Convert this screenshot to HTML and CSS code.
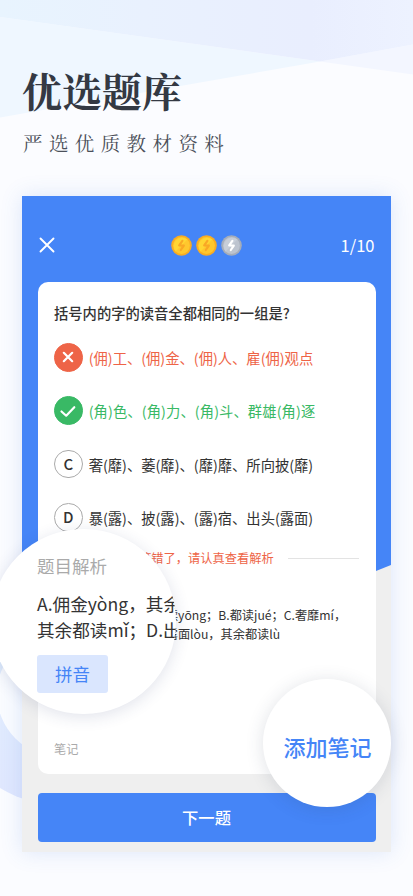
FILE: index.html
```html
<!DOCTYPE html>
<html lang="zh-CN">
<head>
<meta charset="utf-8">
<meta name="viewport" content="width=device-width, initial-scale=1">
<title>优选题库</title>
<link rel="stylesheet" href="styles.css">
</head>
<body>
<div class="page">
  <svg class="backdrop" viewBox="0 0 413 896" aria-hidden="true">
    <defs>
      <linearGradient id="sky" x1="0" x2="1"><stop offset="0" stop-color="#e8f4fe"/><stop offset=".35" stop-color="#e9f1fe"/><stop offset=".75" stop-color="#e9eefe"/><stop offset="1" stop-color="#edf2ff"/></linearGradient>
      <linearGradient id="ring" x1="0" y1="0" x2="0" y2="1"><stop offset=".4" stop-color="#e0edfe"/><stop offset="1" stop-color="#e0e7fe"/></linearGradient>
    </defs>
    <path d="M0 17 320 61.500 0 117.500Z" fill="#eff7ff"/>
    <path d="M320 61.500 413 44.500V74.500Z" fill="#f3f6ff"/>
    <path d="M0 0H413V44.500L320 61.500 0 17Z" fill="url(#sky)"/>
    <circle cx="60" cy="690" r="115" fill="url(#ring)"/>
    <circle cx="60" cy="694" r="63" fill="#fafcff"/>
  </svg>

  <header class="intro">
    <h1>优选题库</h1>
    <p>严选优质教材资料</p>
  </header>

  <main class="phone">
    <div class="topbar">
      <svg class="close" viewBox="0 0 16 16"><path d="M1.500 1.500 14.500 14.500M14.500 1.500 1.500 14.500"/></svg>
      <div class="coins">
        <svg class="coin" viewBox="0 0 21 21"><circle class="rim" cx="10.500" cy="10.500" r="10.300"/><circle class="face" cx="10.500" cy="10.500" r="8.400"/><path class="shine" d="M4.600 16.400A8.400 8.400 0 0 1 16.400 4.600Z"/><path class="bolt" d="M11.400 5.800 8.200 10.300 12.800 10.600 9.800 15"/></svg>
        <svg class="coin" viewBox="0 0 21 21"><circle class="rim" cx="10.500" cy="10.500" r="10.300"/><circle class="face" cx="10.500" cy="10.500" r="8.400"/><path class="shine" d="M4.600 16.400A8.400 8.400 0 0 1 16.400 4.600Z"/><path class="bolt" d="M11.400 5.800 8.200 10.300 12.800 10.600 9.800 15"/></svg>
        <svg class="coin spent" viewBox="0 0 21 21"><circle class="rim" cx="10.500" cy="10.500" r="10.300"/><circle class="face" cx="10.500" cy="10.500" r="8.400"/><path class="shine" d="M4.600 16.400A8.400 8.400 0 0 1 16.400 4.600Z"/><path class="bolt" d="M11.400 5.800 8.200 10.300 12.800 10.600 9.800 15"/></svg>
      </div>
      <span class="count">1/10</span>
    </div>

    <section class="card">
      <h2>括号内的字的读音全都相同的一组是?</h2>
      <ul class="options">
        <li class="wrong"><span class="mark"><svg viewBox="0 0 28 28"><path d="M9.800 9.800 18.200 18.200M18.200 9.800 9.800 18.200"/></svg></span><span>(佣)工、(佣)金、(佣)人、雇(佣)观点</span></li>
        <li class="right"><span class="mark"><svg viewBox="0 0 28 28"><path d="M7.500 14.500 12.200 18.700 20.300 10.200"/></svg></span><span>(角)色、(角)力、(角)斗、群雄(角)逐</span></li>
        <li><span class="mark">C</span><span>奢(靡)、萎(靡)、(靡)靡、所向披(靡)</span></li>
        <li><span class="mark">D</span><span>暴(露)、披(露)、(露)宿、出头(露面)</span></li>
      </ul>
      <div class="verdict">答错了，请认真查看解析</div>
      <p class="analysis">A.佣金yòng，其余都读yōng；B.都读jué；C.奢靡mí，<br>其余都读mǐ；D.出头露面lòu，其余都读lù</p>
      <div class="notes">笔记</div>
    </section>

    <button class="next">下一题</button>
  </main>

  <aside class="lens lens-analysis">
    <h3>题目解析</h3>
    <p>A.佣金yòng，其余<br>其余都读mǐ；D.出</p>
    <span class="tag">拼音</span>
  </aside>
  <aside class="lens lens-note">添加笔记</aside>
</div>
</body>
</html>
```
FILE: styles.css
```css
* { box-sizing: border-box; }
body { margin: 0; font-family: "Noto Sans CJK SC", sans-serif; color: #333; }
h1, h2, h3, p, ul { margin: 0; padding: 0; font-weight: 400; }
.page { position: relative; width: 413px; height: 896px; overflow: hidden; background: #fbfcff; }
.backdrop { position: absolute; inset: 0; width: 413px; height: 896px; }

.intro { position: relative; height: 196px; padding: 62px 0 0 22px; font-family: "Noto Serif CJK SC", "Noto Serif SC", "Source Han Serif SC", "Noto Sans CJK SC", serif; color: #343943; white-space: nowrap; }
.intro h1 { font-size: 40px; line-height: 56px; font-weight: 700; }
.intro p { margin: 10px 0 0 1px; font-size: 19.500px; line-height: 30px; letter-spacing: 6.400px; color: #4b505a; }

.phone { position: relative; width: 369px; height: 656px; margin-left: 22px; padding: 0 15.500px; background: #efefef; box-shadow: 0 0 20px rgba(64, 120, 220, .17); }
.phone::before { content: ""; position: absolute; inset: 0; background: #4585f7; clip-path: polygon(0 0, 100% 0, 100% 369px, 354px 375px, 50% 390px, 0 369px); }
.phone > * { position: relative; }

.topbar { display: grid; grid-template-columns: 1fr auto 1fr; align-items: center; height: 86px; padding: 12px 1px 0; }
.close { width: 16px; height: 16px; fill: none; stroke: #fff; stroke-width: 1.900; stroke-linecap: round; }
.coins { display: flex; gap: 3.600px; }
.coin { width: 21px; height: 21px; }
.rim { fill: #f9ac22; }
.face { fill: #ffc72e; }
.shine { fill: #ffd633; }
.bolt { fill: none; stroke: #f9a825; stroke-width: 2.200; stroke-linejoin: round; stroke-linecap: round; }
.spent .rim { fill: #a5adba; }
.spent .face { fill: #bdc4cf; }
.spent .shine { fill: #c7ced8; }
.spent .bolt { stroke: #fff; }
.count { justify-self: end; color: #fff; font-size: 16.500px; line-height: 24px; }

.card { height: 492px; padding: 20px 16.500px 0; border-radius: 10px; background: #fff; white-space: nowrap; }
.card h2 { font-size: 14.300px; line-height: 22px; font-weight: 500; }
.options { display: grid; gap: 24.700px; margin-top: 19px; list-style: none; font-size: 14.300px; }
.options li { display: flex; align-items: center; gap: 6px; height: 28.700px; }
.mark { display: flex; flex: none; align-items: center; justify-content: center; width: 28.700px; height: 28.700px; border: 1px solid #aaa; border-radius: 50%; font-size: 15px; font-weight: 500; line-height: 20px; }
.mark svg { flex: none; width: 28px; height: 28px; fill: none; stroke: #fff; stroke-width: 2.200; stroke-linecap: round; stroke-linejoin: round; }
.wrong { color: #ee6447; }
.right { color: #39b965; letter-spacing: .1px; }
.wrong .mark { border-color: #ee6447; background: #ee6447; }
.right .mark { border-color: #39b965; background: #39b965; }
.verdict { display: flex; align-items: center; gap: 14px; margin-top: 16.500px; color: #ee6447; font-size: 12.250px; line-height: 20px; }
.verdict::before, .verdict::after { content: ""; flex: 1; height: 1px; background: #e3e3e3; }
.analysis { margin-top: 38px; font-size: 12.200px; line-height: 18.500px; }
.notes { margin-top: 96px; color: #aaa; font-size: 12.200px; line-height: 20px; }
.next { display: block; width: 100%; height: 49px; margin-top: 19px; padding: 0 0 2px; border: 0; border-radius: 4px; background: #4585f7; color: #fff; font: 500 16.300px "Noto Sans CJK SC", sans-serif; }

.lens { position: absolute; border-radius: 50%; background: #fff; white-space: nowrap; }
.lens-analysis { left: -9px; top: 528.500px; width: 184.500px; height: 185px; padding: 24px 0 0 46px; overflow: hidden; box-shadow: 0 3px 16px rgba(45, 60, 110, .14); }
.lens-analysis h3 { color: #aaa; font-size: 17.500px; line-height: 26px; }
.lens-analysis p { margin-top: 12px; font-size: 17.600px; line-height: 26.500px; }
.tag { display: flex; align-items: center; justify-content: center; width: 71px; height: 38px; margin-top: 11px; border-radius: 3px; background: #dae6fe; color: #4585f7; font-size: 17.500px; }
.lens-note { left: 263px; top: 678.500px; display: flex; align-items: center; justify-content: center; width: 128px; height: 128px; padding: 6px 0 0 1px; box-shadow: 0 2px 18px rgba(45, 60, 90, .15); color: #4585f7; font-size: 22px; font-weight: 500; }
```
